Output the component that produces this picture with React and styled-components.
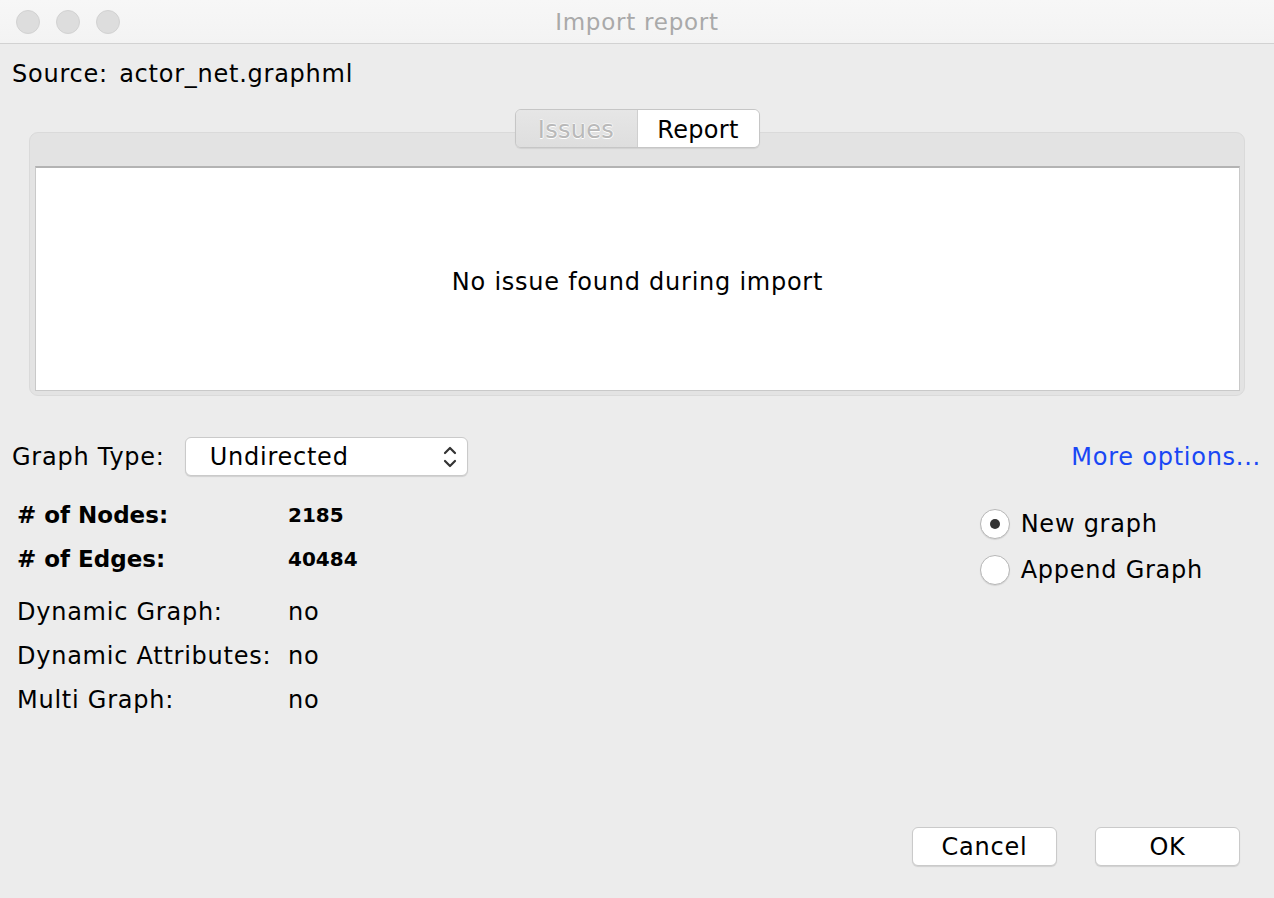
import React from 'react'
import styled, { createGlobalStyle } from 'styled-components'

const Global = createGlobalStyle`
  html, body { margin: 0; padding: 0; }
  body {
    width: 1274px;
    height: 898px;
    overflow: hidden;
    background: #ececec;
    font-family: "DejaVu Sans", "Liberation Sans", sans-serif;
    letter-spacing: 0.75px;
    color: #000;
  }
`

const Window = styled.div`
  width: 1274px;
  height: 898px;
  display: flex;
  flex-direction: column;
  background: #ececec;
`

const TitleBar = styled.div`
  height: 43px;
  flex-shrink: 0;
  display: flex;
  align-items: center;
  position: relative;
  background: linear-gradient(#f7f7f7, #f3f3f3);
  border-bottom: 1px solid #d2d2d2;
  padding-left: 16px;
  gap: 16px;
`

const Light = styled.span`
  width: 22px;
  height: 22px;
  border-radius: 50%;
  background: #dddddd;
  border: 1px solid #d2d2d2;
`

const Title = styled.div`
  position: absolute;
  left: 0;
  right: 0;
  top: 0;
  bottom: 0;
  display: flex;
  align-items: center;
  justify-content: center;
  font-size: 23px;
  color: #a9a9a9;
  pointer-events: none;
`

const Body = styled.div`
  flex: 1;
  display: flex;
  flex-direction: column;
  padding: 15px 0 0 0;
`

const Source = styled.div`
  font-size: 24px;
  padding-left: 12px;
  height: 30px;
  line-height: 30px;
  white-space: pre;
  word-spacing: 3px;
`

const TabArea = styled.div`
  margin: 20px 29px 0 29px;
  display: flex;
  flex-direction: column;
  align-items: center;
`

const Segmented = styled.div`
  display: flex;
  height: 39px;
  box-sizing: border-box;
  border-radius: 6px;
  border: 1px solid #c6c6c6;
  box-shadow: 0 1px 1px rgba(0, 0, 0, 0.08);
  overflow: hidden;
  position: relative;
  z-index: 1;
  margin-bottom: -16px;
`

const Tab = styled.div`
  width: 121px;
  display: flex;
  align-items: center;
  justify-content: center;
  padding-top: 2px;
  font-size: 24px;
  letter-spacing: 0.3px;
  background: ${p => (p.$active ? 'linear-gradient(#e6e6e6, #dedede)' : '#ffffff')};
  color: ${p => (p.$active ? '#b9b9b9' : '#000')};
  text-shadow: ${p => (p.$active ? '0 1px 0 #ffffff, 0 -1px 0 #f4f4f4, 1px 0 0 #f6f6f6' : 'none')};
  & + & { border-left: 1px solid #cfcfcf; }
`

const Panel = styled.div`
  width: 100%;
  height: 264px;
  box-sizing: border-box;
  background: #e3e3e3;
  border: 1px solid #dadada;
  border-radius: 9px;
  padding: 33px 4px 4px 5px;
  display: flex;
`

const PanelContent = styled.div`
  flex: 1;
  background: #fff;
  border: 1px solid #c9c9c9;
  border-top: 2px solid #b3b3b3;
  display: flex;
  align-items: center;
  justify-content: center;
  padding-top: 5px;
  font-size: 24px;
`

const TypeRow = styled.div`
  margin-top: 41px;
  display: flex;
  align-items: center;
  padding: 0 13px 0 12px;
`

const Label = styled.span`
  font-size: 24px;
  margin-right: 20px;
`

const Combo = styled.div`
  width: 283px;
  height: 39px;
  box-sizing: border-box;
  background: #fff;
  border: 1px solid #cacaca;
  border-radius: 6px;
  box-shadow: 0 1px 1px rgba(0, 0, 0, 0.12);
  display: flex;
  align-items: center;
  justify-content: space-between;
  padding: 0 10px 0 24px;
  font-size: 24px;
`

const Link = styled.a`
  margin-left: auto;
  color: #1947f5;
  font-size: 24px;
  cursor: pointer;
`

const Lower = styled.div`
  display: flex;
  justify-content: space-between;
  padding: 17px 0 0 17px;
`

const Stats = styled.div`
  display: grid;
  grid-template-columns: 271px auto;
  align-items: center;
`

const StatLabel = styled.div`
  font-size: ${p => (p.$bold ? '23px' : '24px')};
  font-weight: ${p => (p.$bold ? 700 : 400)};
  letter-spacing: ${p => (p.$bold ? '0' : '0.75px')};
  height: 44px;
  line-height: 44px;
  margin-top: ${p => (p.$gap ? '9px' : '0')};
`

const StatValue = styled.div`
  font-size: ${p => (p.$bold ? '20px' : '24px')};
  font-weight: ${p => (p.$bold ? 700 : 400)};
  letter-spacing: ${p => (p.$bold ? '0' : '0.75px')};
  height: 44px;
  line-height: 44px;
  margin-top: ${p => (p.$gap ? '9px' : '0')};
`

const Radios = styled.div`
  display: flex;
  flex-direction: column;
  gap: 16px;
  padding: 16px 71px 0 0;
`

const RadioRow = styled.label`
  display: flex;
  align-items: center;
  gap: 11px;
  font-size: 24px;
  height: 30px;
  white-space: nowrap;
`

const RadioCircle = styled.span`
  width: 30px;
  height: 30px;
  flex-shrink: 0;
  box-sizing: border-box;
  border-radius: 50%;
  background: #fff;
  border: 1px solid #b7b7b7;
  box-shadow: 0 1px 1px rgba(0, 0, 0, 0.1);
  display: flex;
  align-items: center;
  justify-content: center;
  &::after {
    content: '';
    width: 10px;
    height: 10px;
    border-radius: 50%;
    background: #333;
    display: ${p => (p.$checked ? 'block' : 'none')};
  }
`

const Footer = styled.div`
  margin-top: auto;
  display: flex;
  justify-content: flex-end;
  gap: 38px;
  padding: 0 34px 32px 0;
`

const Button = styled.button`
  width: 145px;
  height: 39px;
  background: #fff;
  border: 1px solid #cacaca;
  border-radius: 6px;
  box-shadow: 0 1px 1px rgba(0, 0, 0, 0.12);
  font-family: inherit;
  letter-spacing: 0.75px;
  font-size: 24px;
  color: #000;
  padding: 0;
`

const Chevrons = () => (
  <svg width="14" height="24" viewBox="0 0 14 24" fill="none" stroke="#333" strokeWidth="2.2" strokeLinecap="round" strokeLinejoin="round">
    <polyline points="2,8 7,3 12,8" />
    <polyline points="2,16 7,21 12,16" />
  </svg>
)

const stats = [
  { label: '# of Nodes:', value: '2185', bold: true },
  { label: '# of Edges:', value: '40484', bold: true },
  { label: 'Dynamic Graph:', value: 'no', gap: true },
  { label: 'Dynamic Attributes:', value: 'no' },
  { label: 'Multi Graph:', value: 'no' },
]

export default function App() {
  return (
    <Window>
      <Global />
      <TitleBar>
        <Light />
        <Light />
        <Light />
        <Title>Import report</Title>
      </TitleBar>
      <Body>
        <Source>Source: actor_net.graphml</Source>
        <TabArea>
          <Segmented>
            <Tab $active>Issues</Tab>
            <Tab>Report</Tab>
          </Segmented>
          <Panel>
            <PanelContent>No issue found during import</PanelContent>
          </Panel>
        </TabArea>
        <TypeRow>
          <Label>Graph Type:</Label>
          <Combo>
            <span>Undirected</span>
            <Chevrons />
          </Combo>
          <Link>More options...</Link>
        </TypeRow>
        <Lower>
          <Stats>
            {stats.map(s => (
              <React.Fragment key={s.label}>
                <StatLabel $bold={s.bold} $gap={s.gap}>{s.label}</StatLabel>
                <StatValue $bold={s.bold} $gap={s.gap}>{s.value}</StatValue>
              </React.Fragment>
            ))}
          </Stats>
          <Radios>
            <RadioRow><RadioCircle $checked />New graph</RadioRow>
            <RadioRow><RadioCircle />Append Graph</RadioRow>
          </Radios>
        </Lower>
        <Footer>
          <Button>Cancel</Button>
          <Button>OK</Button>
        </Footer>
      </Body>
    </Window>
  )
}
